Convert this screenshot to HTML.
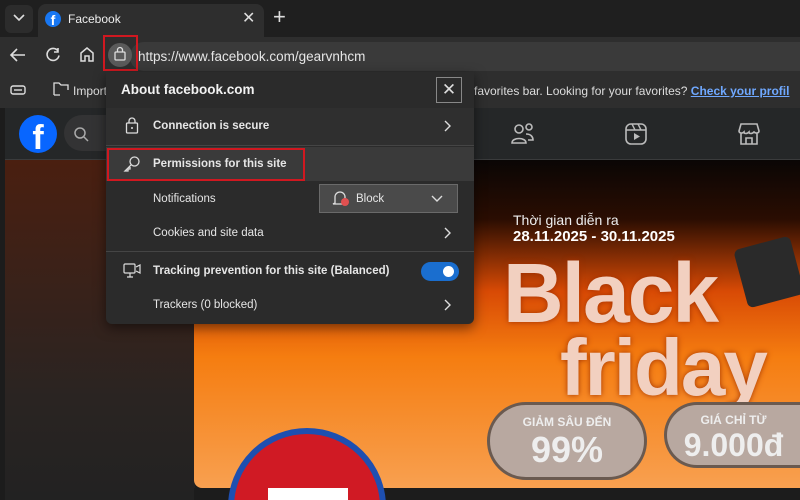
<!DOCTYPE html>
<html style="width:800px;height:500px;overflow:hidden"><head><meta charset="utf-8"><style>
*{margin:0;padding:0;box-sizing:border-box}
body{width:800px;height:500px;overflow:hidden;background:#1c1c1c;font-family:"Liberation Sans",sans-serif;position:relative;color:#e6e6e6}
.abs{position:absolute}
.t{font-size:12px}
</style></head><body>
<div class="abs" style="left:0;top:0;width:800px;height:500px;overflow:hidden">
<div class="abs" style="left:0;top:0;width:800px;height:37px;background:#1f1f1f"></div>
<div class="abs" style="left:5px;top:5px;width:28px;height:28px;background:#2c2c2c;border-radius:6px"></div>
<svg class="abs" style="left:12px;top:13px" width="14" height="10"><path d="M2 2l5 5 5-5" stroke="#ddd" stroke-width="1.6" fill="none"/></svg>
<div class="abs" style="left:38px;top:4px;width:226px;height:34px;background:#2e2e2e;border-radius:8px 8px 0 0"></div>
<div class="abs" style="left:45px;top:11px;width:16px;height:16px;border-radius:50%;background:#1877f2;color:#fff;font-weight:bold;font-size:14px;text-align:center;line-height:18px">f</div>
<div class="abs t" style="left:68px;top:12px;color:#eee">Facebook</div>
<div class="abs" style="left:242px;top:8px;font-size:16px;color:#ddd">✕</div>
<div class="abs" style="left:273px;top:4px;font-size:22px;color:#ddd;font-weight:300">+</div>
<div class="abs" style="left:0;top:37px;width:800px;height:35px;background:#2e2e2e"></div>
<svg class="abs" style="left:8px;top:46px" width="20" height="18"><path d="M17 9H3M9 3L3 9l6 6" stroke="#ddd" stroke-width="1.6" fill="none"/></svg>
<svg class="abs" style="left:44px;top:46px" width="18" height="18"><path d="M14 5A6 6 0 1 0 15 9.5M14 2v4h-4" stroke="#ddd" stroke-width="1.6" fill="none"/></svg>
<svg class="abs" style="left:78px;top:45px" width="18" height="18"><path d="M3 8l6-5 6 5v8h-4v-5H7v5H3z" stroke="#ddd" stroke-width="1.5" fill="none"/></svg>
<div class="abs" style="left:130px;top:42px;width:670px;height:29px;background:#3a3a3a;border-radius:14px 0 0 14px"></div>
<div class="abs" style="left:108px;top:43px;width:24px;height:24px;border-radius:50%;background:#5a5a5a"></div>
<svg class="abs" style="left:112px;top:46px" width="16" height="16"><rect x="3" y="6" width="10" height="8" rx="1" stroke="#ddd" fill="none" stroke-width="1.3"/><path d="M5.5 6V4a2.5 2.5 0 0 1 5 0v2" stroke="#ddd" fill="none" stroke-width="1.3"/></svg>
<div class="abs" style="left:103px;top:35px;width:35px;height:36px;border:2px solid #d01820"></div>
<div class="abs" style="left:138px;top:49px;font-size:13.5px;color:#e6e6e6">https://www.facebook.com/gearvnhcm</div>
<div class="abs" style="left:0;top:72px;width:800px;height:36px;background:#2e2e2e"></div>
<svg class="abs" style="left:10px;top:83px" width="16" height="14"><rect x="1" y="3" width="14" height="8" rx="2" stroke="#ddd" fill="none" stroke-width="1.4"/><path d="M4 7h8" stroke="#ddd" stroke-width="1.4"/></svg>
<svg class="abs" style="left:52px;top:81px" width="18" height="16"><path d="M2 14V2h5l2 2h7v5M8 14H2" stroke="#ddd" fill="none" stroke-width="1.3"/></svg>
<div class="abs t" style="left:73px;top:84px;color:#ddd">Import</div>
<div class="abs t" style="left:474px;top:84px;color:#ddd">favorites bar. Looking for your favorites? <span style="color:#6fa8ff;text-decoration:underline;font-weight:bold">Check your profil</span></div>
<div class="abs" style="left:5px;top:108px;width:795px;height:52px;background:#252728;border-bottom:1px solid #3a3b3c"></div>
<div class="abs" style="left:19px;top:115px;width:38px;height:38px;border-radius:50%;background:#0866ff;color:#fff;font-weight:bold;font-size:34px;text-align:center;line-height:46px;overflow:hidden">f</div>
<div class="abs" style="left:64px;top:115px;width:60px;height:36px;border-radius:18px;background:#333334"></div>
<svg class="abs" style="left:73px;top:126px" width="16" height="16"><circle cx="7" cy="7" r="5" stroke="#aaa" fill="none" stroke-width="1.5"/><path d="M11 11l4 4" stroke="#aaa" stroke-width="1.5"/></svg>
<svg class="abs" style="left:510px;top:122px" width="26" height="24"><circle cx="9" cy="7" r="4" stroke="#bbb" fill="none" stroke-width="1.6"/><circle cx="19" cy="5" r="3" stroke="#bbb" fill="none" stroke-width="1.6"/><path d="M2 21c0-6 14-6 14 0zM16 12c5 0 7 3 7 6h-5" stroke="#bbb" fill="none" stroke-width="1.6"/></svg>
<svg class="abs" style="left:624px;top:122px" width="24" height="24"><rect x="2" y="2" width="20" height="20" rx="5" stroke="#bbb" fill="none" stroke-width="1.6"/><path d="M2 8h20M8 2l3 6M14 2l3 6" stroke="#bbb" stroke-width="1.4"/><path d="M10 11v7l6-3.5z" fill="#bbb"/></svg>
<svg class="abs" style="left:736px;top:122px" width="26" height="24"><path d="M3 9l2-7h16l2 7c0 2-3 3-5 1-2 2-5 2-5 0-2 2-5 2-5 0-2 2-5 1-5-1zM5 11v11h16V11M10 22v-6h6v6" stroke="#bbb" fill="none" stroke-width="1.6"/></svg>
<div class="abs" style="left:5px;top:160px;width:190px;height:340px;background:linear-gradient(#4a1f10,#2a2422 70%,#222)"></div>
<div class="abs" style="left:194px;top:160px;width:606px;height:328px;border-radius:0 0 0 8px;background:linear-gradient(#0a0605 0%,#2a0d02 18%,#d84a05 40%,#f57d10 60%,#f8a050 100%)"></div>
<div class="abs" style="left:194px;top:488px;width:606px;height:12px;background:#1c1c1c"></div>
<div class="abs" style="left:513px;top:212px;font-size:14px;color:#eee">Thời gian diễn ra</div>
<div class="abs" style="left:513px;top:228px;font-size:15px;font-weight:bold;color:#fff">28.11.2025 - 30.11.2025</div>
<div class="abs" style="left:503px;top:245px;font-size:84px;font-weight:bold;color:#f2d0c0;letter-spacing:-2px;text-shadow:0 0 6px #a03000">Black</div>
<div class="abs" style="left:560px;top:322px;font-size:80px;font-weight:bold;color:#f2d0c0;letter-spacing:-2px;text-shadow:0 0 6px #a03000">friday</div>
<div class="abs" style="left:740px;top:242px;width:58px;height:60px;background:#2a2a2a;border-radius:6px;transform:rotate(-15deg)"></div>
<div class="abs" style="left:487px;top:402px;width:160px;height:78px;border-radius:39px;background:#b8a8a0;border:3px solid #6a5a50;text-align:center;color:#eee;font-weight:bold"><div style="font-size:12px;margin-top:10px">GIẢM SÂU ĐẾN</div><div style="font-size:36px">99%</div></div>
<div class="abs" style="left:664px;top:402px;width:136px;height:66px;border-radius:33px 0 0 33px;background:#b8a8a0;border:3px solid #6a5a50;border-right:none;text-align:center;color:#eee;font-weight:bold"><div style="font-size:12px;margin-top:8px">GIÁ CHỈ TỪ</div><div style="font-size:32px">9.000đ</div></div>
<div class="abs" style="left:228px;top:428px;width:158px;height:72px;overflow:hidden"><div style="width:158px;height:158px;border-radius:50%;background:#d01a24;border:6px solid #1e4fb0"></div><div class="abs" style="left:40px;top:60px;width:80px;height:12px;background:#fff"></div></div>
<div class="abs" style="left:106px;top:72px;width:368px;height:252px;background:#2b2b2b;border-radius:0 0 6px 6px;box-shadow:0 4px 12px rgba(0,0,0,.5)"></div>
<div class="abs" style="left:121px;top:82px;font-size:13.5px;font-weight:bold;color:#f2f2f2">About facebook.com</div>
<div class="abs" style="left:436px;top:77px;width:26px;height:26px;border:1.5px solid #888;color:#ddd;text-align:center;font-size:17px;line-height:23px">✕</div>
<div class="abs" style="left:106px;top:108px;width:368px;height:38px;background:#2f2f2f;border-bottom:1px solid #454545"></div>
<svg class="abs" style="left:125px;top:117px" width="14" height="18"><rect x="1.5" y="6" width="11" height="10" rx="1" stroke="#ddd" fill="none" stroke-width="1.3"/><path d="M4 6V4a3 3 0 0 1 6 0v2" stroke="#ddd" fill="none" stroke-width="1.3"/><circle cx="7" cy="11" r="1" fill="#ddd"/></svg>
<div class="abs" style="left:153px;top:120px;font-size:11.5px;font-weight:bold">Connection is secure</div>
<div class="abs" style="left:106px;top:147px;width:368px;height:34px;background:#3a3a3a"></div>
<svg class="abs" style="left:123px;top:155px" width="18" height="18"><circle cx="11.5" cy="6.5" r="4.5" stroke="#ddd" fill="none" stroke-width="1.3"/><path d="M8.5 9.5L2 16h3v-2h2v-2" stroke="#ddd" fill="none" stroke-width="1.3"/></svg>
<div class="abs" style="left:153px;top:158px;font-size:11.5px;font-weight:bold">Permissions for this site</div>
<div class="abs" style="left:107px;top:148px;width:198px;height:33px;border:2px solid #d01820"></div>
<div class="abs" style="left:153px;top:193px;font-size:11.5px">Notifications</div>
<div class="abs" style="left:319px;top:184px;width:139px;height:29px;background:#4a4a4a;border:1px solid #6a6a6a"></div>
<svg class="abs" style="left:331px;top:189px" width="22" height="20"><path d="M4 14V8a5 5 0 0 1 10 0v6l2 1H2z" stroke="#ddd" fill="none" stroke-width="1.3"/><circle cx="14" cy="13" r="4" fill="#e05050"/></svg>
<div class="abs" style="left:356px;top:193px;font-size:11.5px">Block</div>
<svg class="abs" style="left:430px;top:194px" width="14" height="10"><path d="M2 2l5 5 5-5" stroke="#ddd" stroke-width="1.4" fill="none"/></svg>
<div class="abs" style="left:153px;top:227px;font-size:11.5px">Cookies and site data</div>
<div class="abs" style="left:106px;top:251px;width:368px;height:1px;background:#454545"></div>
<svg class="abs" style="left:123px;top:263px" width="18" height="16"><rect x="1" y="1" width="11" height="9" rx="1" stroke="#ddd" fill="none" stroke-width="1.2"/><path d="M4 14h6M7 10v4M13 4l4-2v8l-4-2" stroke="#ddd" fill="none" stroke-width="1.2"/></svg>
<div class="abs" style="left:153px;top:265px;font-size:11.5px;font-weight:bold">Tracking prevention for this site (Balanced)</div>
<div class="abs" style="left:421px;top:262px;width:38px;height:19px;border-radius:10px;background:#1a6ecf"></div>
<div class="abs" style="left:443px;top:266px;width:11px;height:11px;border-radius:50%;background:#fff"></div>
<div class="abs" style="left:153px;top:299px;font-size:11.5px">Trackers (0 blocked)</div>
<svg class="abs" style="left:443px;top:119px" width="10" height="14"><path d="M2 2l5 5-5 5" stroke="#ddd" stroke-width="1.4" fill="none"/></svg>
<svg class="abs" style="left:443px;top:226px" width="10" height="14"><path d="M2 2l5 5-5 5" stroke="#ddd" stroke-width="1.4" fill="none"/></svg>
<svg class="abs" style="left:443px;top:298px" width="10" height="14"><path d="M2 2l5 5-5 5" stroke="#ddd" stroke-width="1.4" fill="none"/></svg>
</div>
</body></html>
